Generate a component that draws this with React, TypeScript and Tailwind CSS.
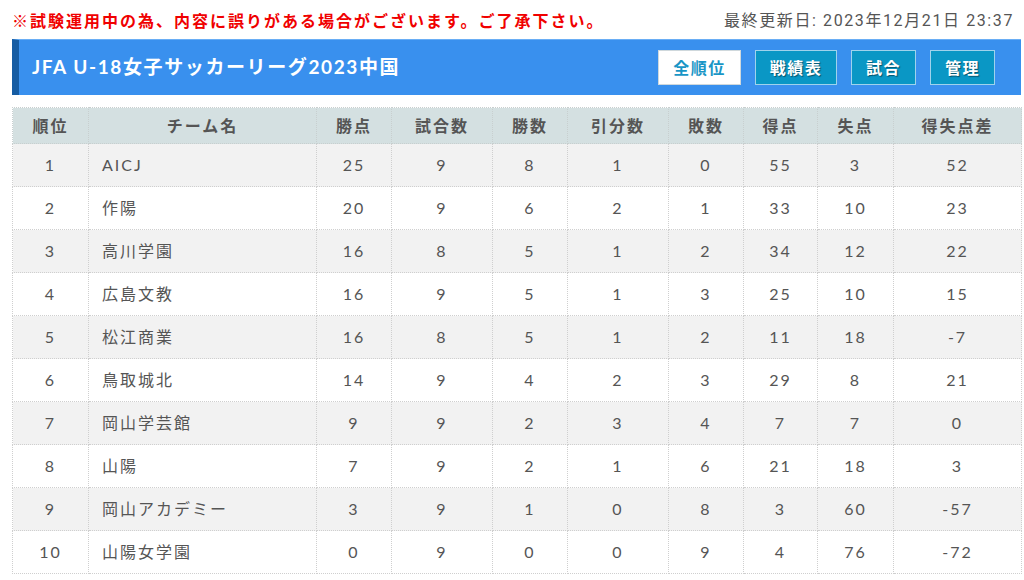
const cols = [
  { label: '順位', w: 'w-[76px]' },
  { label: 'チーム名', w: 'w-[228px]' },
  { label: '勝点', w: 'w-[75px]' },
  { label: '試合数', w: 'w-[101px]' },
  { label: '勝数', w: 'w-[75px]' },
  { label: '引分数', w: 'w-[101px]' },
  { label: '敗数', w: 'w-[75px]' },
  { label: '得点', w: 'w-[74px]' },
  { label: '失点', w: 'w-[76px]' },
  { label: '得失点差', w: 'w-[128px]' },
];

const rows: (string | number)[][] = [
  [1, 'AICJ', 25, 9, 8, 1, 0, 55, 3, 52],
  [2, '作陽', 20, 9, 6, 2, 1, 33, 10, 23],
  [3, '高川学園', 16, 8, 5, 1, 2, 34, 12, 22],
  [4, '広島文教', 16, 9, 5, 1, 3, 25, 10, 15],
  [5, '松江商業', 16, 8, 5, 1, 2, 11, 18, -7],
  [6, '鳥取城北', 14, 9, 4, 2, 3, 29, 8, 21],
  [7, '岡山学芸館', 9, 9, 2, 3, 4, 7, 7, 0],
  [8, '山陽', 7, 9, 2, 1, 6, 21, 18, 3],
  [9, '岡山アカデミー', 3, 9, 1, 0, 8, 3, 60, -57],
  [10, '山陽女学園', 0, 9, 0, 0, 9, 4, 76, -72],
];

export default function App() {
  return (
    <div className="w-[1024px] h-[580px] overflow-hidden bg-white pl-3 pr-[3px] font-['Lato','Noto_Sans_CJK_JP',sans-serif]">
      {/* notice line */}
      <div className="flex items-center justify-between h-[39px] pt-[2px]">
        <p className="text-[16px] font-bold text-[#f00000] tracking-[2px]">
          ※試験運用中の為、内容に誤りがある場合がございます。ご了承下さい。
        </p>
        <p className="text-[16px] text-[#555] tracking-[1.6px] pr-[7px] font-['Roboto','Noto_Sans_CJK_JP',sans-serif]">最終更新日: 2023年12月21日 23:37</p>
      </div>

      {/* title bar */}
      <div className="flex items-center justify-between h-[56px] bg-[#3990ee] border-t border-[#6aaef5] border-l-[7px] border-l-[#165ca3] pl-[13px] pr-[26px]">
        <h1 className="text-[19px] font-bold text-white tracking-[1.6px]">JFA U-18女子サッカーリーグ2023中国</h1>
        <div className="flex gap-[14px] tracking-[1.5px]">
          <button className="w-[83px] h-[35px] bg-white border border-[#cfd8dc] text-[#1996c6] text-[16px] font-bold">全順位</button>
          <button className="w-[82px] h-[35px] bg-[#0a97c5] border border-[#9fd3ec] text-white text-[16px] font-bold [text-shadow:1px_1px_1px_rgba(0,0,0,0.45)]">戦績表</button>
          <button className="w-[65px] h-[35px] bg-[#0a97c5] border border-[#9fd3ec] text-white text-[16px] font-bold [text-shadow:1px_1px_1px_rgba(0,0,0,0.45)]">試合</button>
          <button className="w-[65px] h-[35px] bg-[#0a97c5] border border-[#9fd3ec] text-white text-[16px] font-bold [text-shadow:1px_1px_1px_rgba(0,0,0,0.45)]">管理</button>
        </div>
      </div>

      {/* standings */}
      <table className="mt-[12px] w-[1009px] table-fixed border-collapse text-[16px] text-[#555] tracking-[2px]">
        <thead>
          <tr className="h-[36px] bg-[#d4e0e1]">
            {cols.map((c) => (
              <th key={c.label} className={`${c.w} font-bold text-[#555] border border-dotted border-[#c8cfcf]`}>{c.label}</th>
            ))}
          </tr>
        </thead>
        <tbody>
          {rows.map((r, i) => (
            <tr key={i} className={`h-[43px] ${i % 2 === 0 ? 'bg-[#f2f2f2]' : 'bg-white'}`}>
              {r.map((v, j) => (
                <td
                  key={j}
                  className={`border border-dotted border-[#cfcfcf] ${j === 1 ? 'text-left pl-[13px]' : 'text-center'}`}
                >
                  {v}
                </td>
              ))}
            </tr>
          ))}
        </tbody>
      </table>
    </div>
  );
}
